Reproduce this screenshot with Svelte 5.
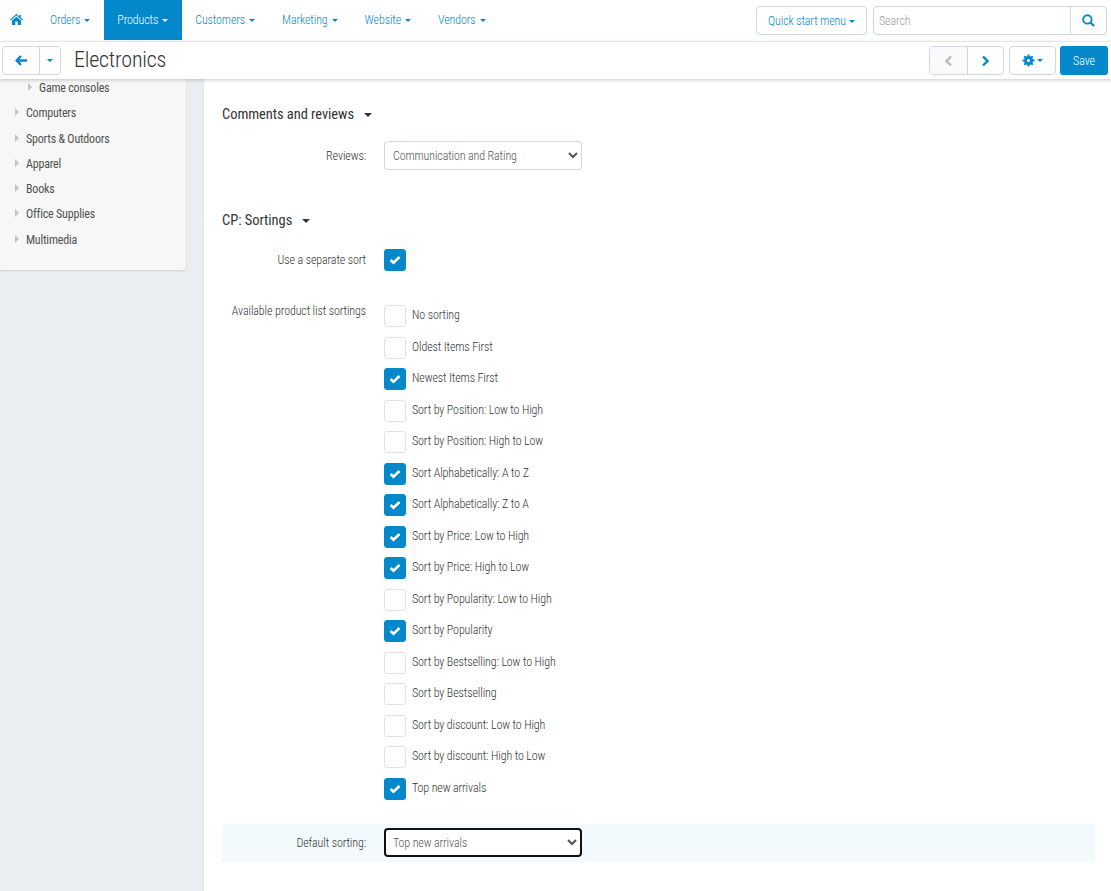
<script>
  const nav = ['Orders', 'Products', 'Customers', 'Marketing', 'Website', 'Vendors'];
  const cats = ['Computers', 'Sports & Outdoors', 'Apparel', 'Books', 'Office Supplies', 'Multimedia'];
  const sorts = [
    ['No sorting', false], ['Oldest Items First', false], ['Newest Items First', true],
    ['Sort by Position: Low to High', false], ['Sort by Position: High to Low', false],
    ['Sort Alphabetically: A to Z', true], ['Sort Alphabetically: Z to A', true],
    ['Sort by Price: Low to High', true], ['Sort by Price: High to Low', true],
    ['Sort by Popularity: Low to High', false], ['Sort by Popularity', true],
    ['Sort by Bestselling: Low to High', false], ['Sort by Bestselling', false],
    ['Sort by discount: Low to High', false], ['Sort by discount: High to Low', false],
    ['Top new arrivals', true]
  ];
</script>

{#snippet check(on)}
  <span class="box" class:on>
    {#if on}
      <svg width="12" height="10" viewBox="0 0 12 10"><path d="M1.500 5 4.500 7.700 10.500 2" fill="none" stroke="#fff" stroke-width="2.600"/></svg>
    {/if}
  </span>
{/snippet}

<div class="page">
  <header class="top">
    <a class="home" href="#home" aria-label="Home">
      <svg width="13" height="11" viewBox="0 0 13 11"><path d="M6.5 0 0 5.6l.7.8L6.5 1.6l5.8 4.8.7-.8-2.2-1.9V.8H9.2v1.6zM2 6.4V11h3.3V7.6h2.4V11H11V6.4L6.5 2.7z" fill="#0388cc"/></svg>
    </a>
    <nav class="nav">
      {#each nav as n}
        <a href="#n" class="item" class:active={n === 'Products'}>{n}<i class="caret"></i></a>
      {/each}
    </nav>
    <button class="btn quick">Quick start menu<i class="caret"></i></button>
    <div class="search">
      <input placeholder="Search" />
      <span class="sbtn">
        <svg width="13" height="13" viewBox="0 0 13 13"><circle cx="5.4" cy="5.4" r="4.2" fill="none" stroke="#0388cc" stroke-width="1.9"/><path d="M8.4 8.4 12 12" stroke="#0388cc" stroke-width="2.2"/></svg>
      </span>
    </div>
  </header>

  <div class="sub">
    <div class="group back">
      <span class="gb arrow">
        <svg width="12" height="11" viewBox="0 0 12 11"><path d="M6 1 1.6 5.5 6 10M2 5.5h10" fill="none" stroke="#0388cc" stroke-width="2.4"/></svg>
      </span>
      <span class="gb drop"><i class="caret blue"></i></span>
    </div>
    <h1>Electronics</h1>
    <div class="group pager">
      <span class="gb prev">
        <svg width="9" height="12" viewBox="0 0 9 12"><path d="M7 1.5 2.5 6 7 10.500" fill="none" stroke="#bbb" stroke-width="2.4"/></svg>
      </span>
      <span class="gb next">
        <svg width="9" height="12" viewBox="0 0 9 12"><path d="M2 1.500 6.500 6 2 10.500" fill="none" stroke="#0388cc" stroke-width="2.4"/></svg>
      </span>
    </div>
    <span class="gear">
      <svg width="13" height="13" viewBox="0 0 13 13"><circle cx="6.500" cy="6.500" r="3.300" fill="none" stroke="#0388cc" stroke-width="2.600"/><path d="M6.500.5v12M.5 6.500h12M2.300 2.300l8.400 8.400M10.700 2.300l-8.400 8.400" stroke="#0388cc" stroke-width="2"/><circle cx="6.500" cy="6.500" r="1.500" fill="#fff"/></svg>
      <i class="caret blue"></i>
    </span>
    <button class="save">Save</button>
  </div>

  <div class="body">
    <aside class="aside">
      <div class="panel">
        <div class="cat sub-cat"><i class="tri"></i>Game consoles</div>
        {#each cats as c}
          <div class="cat"><i class="tri"></i>{c}</div>
        {/each}
      </div>
    </aside>

    <main class="main">
      <h2 class="first">Comments and reviews<i class="caret dark"></i></h2>
      <div class="row reviews">
        <span class="lbl">Reviews:</span>
        <select class="sel"><option>Communication and Rating</option></select>
      </div>

      <h2 class="second">CP: Sortings<i class="caret dark"></i></h2>
      <div class="row sep">
        <span class="lbl">Use a separate sort</span>
        {@render check(true)}
      </div>

      <div class="row avail">
        <span class="lbl top-lbl">Available product list sortings</span>
        <div class="list">
          {#each sorts as s}
            <div class="opt">{@render check(s[1])}<span>{s[0]}</span></div>
          {/each}
        </div>
      </div>

      <div class="row def">
        <span class="lbl">Default sorting:</span>
        <select class="sel focus"><option>Top new arrivals</option></select>
      </div>
    </main>
  </div>
</div>

<style>
  :global(body) { margin: 0; }
  .page {
    width: 1111px; height: 891px; overflow: hidden; display: flex; flex-direction: column;
    font-family: Roboto, "Liberation Sans", sans-serif; font-weight: 300; font-size: 12px; color: #333; background: #fff;
    font-stretch: 87%; letter-spacing: -0.11px;
  }
  .caret {
    display: inline-block; width: 0; height: 0; margin-left: 4px; vertical-align: middle;
    border-left: 3.5px solid transparent; border-right: 3.5px solid transparent; border-top: 3.5px solid currentColor;
  }
  .caret.blue { color: #0388cc; margin: 0; }
  .caret.dark { color: #333; margin-left: 10px; border-left-width: 4.5px; border-right-width: 4.5px; border-top-width: 4px; }

  .top { height: 41px; flex: none; display: flex; align-items: flex-start; border-bottom: 1px solid #f2f2f2; box-sizing: content-box; }
  .home { width: 32px; height: 38px; display: flex; align-items: center; justify-content: center; flex: none; }
  .nav { display: flex; flex: 1; }
  .item { height: 40px; line-height: 40px; padding: 0 14px 0 13px; color: #0388cc; text-decoration: none; white-space: nowrap; }
  .item:first-child { padding-left: 18px; }
  .item.active { background: #0388cc; color: #fff; }
  .btn { font: inherit; font-stretch: 87%; letter-spacing: -0.11px; background: #fff; cursor: pointer; }
  .quick { margin-top: 6px; width: 111px; height: 29px; border: 1px solid #cdd8e3; border-radius: 4px; color: #0388cc; padding: 0; }
  .quick .caret { margin-left: 3px; }
  .search { margin: 6px 4px 0 6px; width: 234px; height: 29px; border: 1px solid #cdd8e3; border-radius: 4px; display: flex; box-sizing: border-box; }
  .search input { flex: 1; min-width: 0; border: 0; outline: 0; background: none; padding: 0 5px; font: inherit; font-stretch: 87%; letter-spacing: -0.11px; }
  .search input::placeholder { color: #999; }
  .sbtn { width: 35px; border-left: 1px solid #cdd8e3; display: flex; align-items: center; justify-content: center; }

  .sub {
    position: relative; z-index: 2; height: 37px; flex: none; display: flex; align-items: center; padding: 0 2px;
    background: #fff; box-shadow: 0 1px 4px rgba(0,0,0,.22);
  }
  .group { display: flex; height: 29px; border: 1px solid #cdd8e3; border-radius: 4px; box-sizing: border-box; }
  .gb { display: flex; align-items: center; justify-content: center; }
  .back { width: 59px; }
  .arrow { width: 36px; border-right: 1px solid #cdd8e3; }
  .drop { flex: 1; }
  h1 { flex: 1; margin: 0 0 0 13px; font-size: 22px; font-weight: 300; color: #333; letter-spacing: -0.2px; position: relative; top: -1px; }
  .pager { width: 75px; margin-right: 5px; }
  .prev { width: 37px; background: #fafafa; border-right: 1px solid #cdd8e3; border-radius: 3px 0 0 3px; }
  .next { flex: 1; }
  .gear {
    width: 47px; height: 29px; box-sizing: border-box; border: 1px solid #cdd8e3; border-radius: 4px; margin-right: 4px;
    display: flex; align-items: center; justify-content: center; gap: 2px;
  }
  .save { width: 48px; height: 29px; border: 0; border-radius: 3px; background: #0388cc; color: #fff; font: inherit; font-stretch: 87%; letter-spacing: -0.11px; padding: 0; margin-right: 1px; }

  .body { flex: 1; min-height: 0; display: flex; }
  .aside { width: 203px; flex: none; background: #ebeef1; border-right: 1px solid #e6e9ec; }
  .panel {
    width: 186px; height: 191px; background: #f7f7f7; border-radius: 0 0 4px 0; box-shadow: 0 1px 2px rgba(0,0,0,.12);
    box-sizing: border-box; padding-top: 1px;
  }
  .cat { height: 25.250px; line-height: 16px; padding-left: 26px; position: relative; color: #333; font-weight: 400; opacity: .85; letter-spacing: -0.2px; }
  .sub-cat { padding-left: 39px; }
  .tri {
    position: absolute; left: 15px; top: 3px; width: 0; height: 0;
    border-top: 4px solid transparent; border-bottom: 4px solid transparent; border-left: 4px solid #bbb;
  }
  .sub-cat .tri { left: 28px; }

  .main { flex: 1; min-width: 0; padding: 0 16px 0 18px; }
  h2 { margin: 0; font-size: 14.500px; font-weight: 400; color: #333; line-height: 20px; letter-spacing: -0.06px; }
  .first { margin-top: 26px; }
  .second { margin-top: 41px; }
  .row { display: flex; }
  .lbl { width: 144px; flex: none; text-align: right; margin-right: 18px; white-space: nowrap; }
  .reviews { margin-top: 16px; align-items: center; }
  .sel {
    width: 198px; height: 29px; background: #fff; border: 1px solid #cdd8e3; border-radius: 3px; font: inherit; font-stretch: 87%; letter-spacing: -0.11px; color: #555;
    padding: 0 4px; box-sizing: border-box;
  }
  .sep { margin-top: 18px; align-items: center; }
  .avail { margin-top: 34.400px; }
  .top-lbl { position: relative; top: -1px; }
  .list { display: flex; flex-direction: column; gap: 9.500px; }
  .opt { display: flex; align-items: center; gap: 6px; height: 22px; }
  .opt span:last-child { position: relative; top: -1px; }
  .box {
    width: 22px; height: 22px; flex: none; box-sizing: border-box; border: 1px solid #dfe3e8; border-radius: 3px; background: #fff;
    display: flex; align-items: center; justify-content: center;
  }
  .box.on { background: #0388cc; border-color: #0388cc; }
  .def { margin-top: 24.100px; height: 38px; background: #f3fafd; align-items: center; }
  .focus { border: 2px solid #111; border-radius: 4px; padding: 0 3px; }
</style>
